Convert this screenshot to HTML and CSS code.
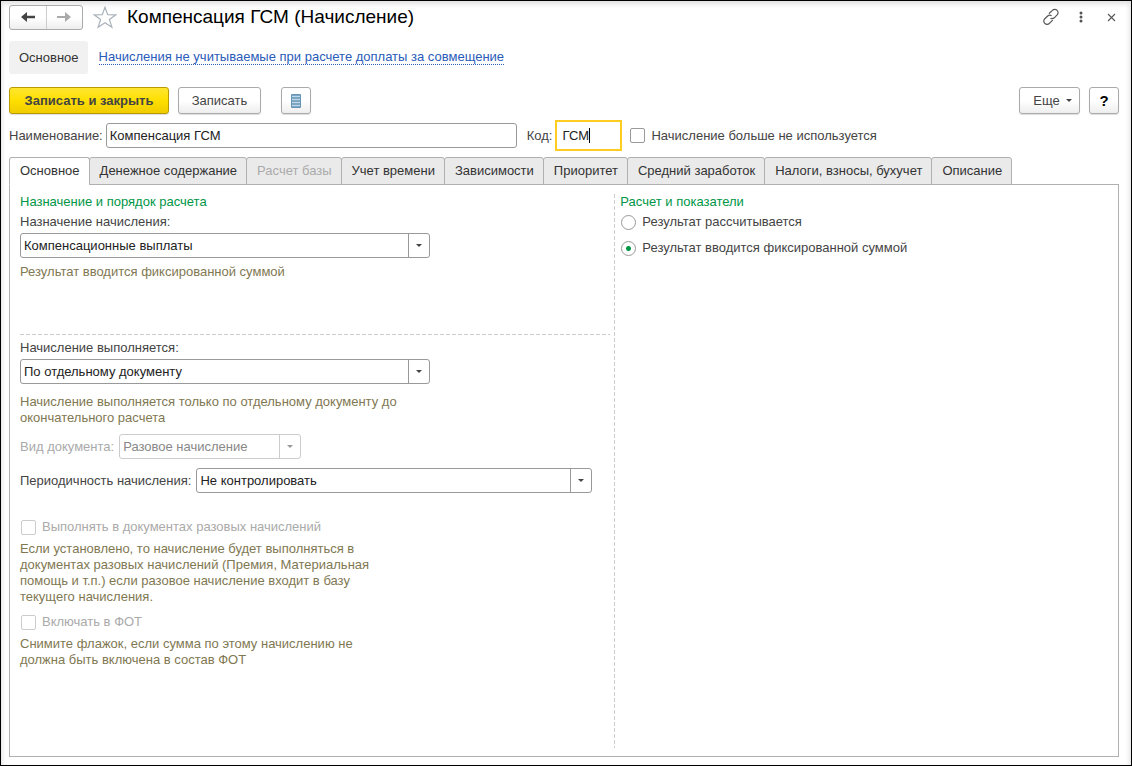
FILE: index.html
```html
<!DOCTYPE html>
<html lang="ru">
<head>
<meta charset="utf-8">
<meta name="viewport" content="width=device-width, initial-scale=1">
<title>Компенсация ГСМ (Начисление)</title>
<link rel="stylesheet" href="styles.css">
</head>
<body>
<main class="window">
  <header class="titlebar">
    <div class="history">
      <button class="history-btn" type="button" aria-label="Назад">
        <svg width="14" height="12" viewBox="0 0 14 12"><path d="M0 6 6 1v3.7h8v2.6H6V11Z" fill="#444"/></svg>
      </button>
      <button class="history-btn" type="button" aria-label="Вперед">
        <svg width="14" height="12" viewBox="0 0 14 12"><path d="M14 6 8 1v3.9H0v2.2h8V11Z" fill="#aaa"/></svg>
      </button>
    </div>
    <button class="icon-btn star" type="button" aria-label="В избранное">
      <svg width="24" height="23" viewBox="0 0 24 23"><path d="M12 1.2 14.7 8.6 22.9 8.8 16.4 13.6 18.9 21.3 12 16.7 5.1 21.3 7.6 13.6 1.1 8.8 9.3 8.6Z" fill="#fff" stroke="#aab2ba" stroke-width="1.2"/></svg>
    </button>
    <h1 class="title">Компенсация ГСМ (Начисление)</h1>
    <div class="window-tools">
      <button class="icon-btn" type="button" aria-label="Ссылка">
        <svg width="18" height="18" viewBox="0 0 18 18" fill="none" stroke="#555" stroke-width="1.2" stroke-linecap="round"><path d="M7.3 5.3 10.4 2.4a3.1 3.1 0 0 1 4.7 0 3.1 3.1 0 0 1 0 4.5L12.3 9.8a3.1 3.1 0 0 1-3.4.6"/><path d="M10.5 12.4 7.4 15.4a3.1 3.1 0 0 1-4.6 0 3.1 3.1 0 0 1 0-4.6L5.7 8a3.1 3.1 0 0 1 3.5-.5"/></svg>
      </button>
      <button class="icon-btn" type="button" aria-label="Меню">
        <svg width="4" height="12" viewBox="0 0 4 12" fill="#555"><circle cx="2" cy="2" r="1.5"/><circle cx="2" cy="6" r="1.5"/><circle cx="2" cy="10" r="1.5"/></svg>
      </button>
      <button class="icon-btn close" type="button" aria-label="Закрыть">
        <svg width="9" height="9" viewBox="0 0 9 9"><path d="M1 1l7 7M8 1 1 8" stroke="#555" stroke-width="1.1"/></svg>
      </button>
    </div>
  </header>

  <nav class="sections">
    <a class="section-current" href="#main">Основное</a>
    <a class="section-link" href="#excluded">Начисления не учитываемые при расчете доплаты за совмещение</a>
  </nav>

  <div class="commands">
    <button class="btn btn-primary" type="button">Записать и закрыть</button>
    <button class="btn btn-save" type="button">Записать</button>
    <button class="btn btn-list" type="button" aria-label="Список">
      <svg width="10" height="14" viewBox="0 0 10 14"><rect width="10" height="14" rx="1" fill="#6795b5"/><path d="M1 2.5h8M1 5.5h8M1 8.5h8M1 11.5h8" stroke="#bfd9ea" stroke-width="1.4"/></svg>
    </button>
    <button class="btn btn-more" type="button">Еще <span class="caret-down"></span></button>
    <button class="btn btn-help" type="button">?</button>
  </div>

  <div class="identity">
    <label for="name">Наименование:</label>
    <input class="text name" id="name" type="text" value="Компенсация ГСМ">
    <label class="code-label" for="code">Код:</label>
    <span class="code-box"><input class="text code" id="code" type="text" value="ГСМ"><i class="cursor"></i></span>
    <label class="check unused"><input type="checkbox">Начисление больше не используется</label>
  </div>

  <div class="tabs" role="tablist">
    <button class="tab active" role="tab" aria-selected="true" type="button">Основное</button>
    <button class="tab" role="tab" type="button">Денежное содержание</button>
    <button class="tab" role="tab" type="button" disabled>Расчет базы</button>
    <button class="tab" role="tab" type="button">Учет времени</button>
    <button class="tab" role="tab" type="button">Зависимости</button>
    <button class="tab" role="tab" type="button">Приоритет</button>
    <button class="tab" role="tab" type="button">Средний заработок</button>
    <button class="tab" role="tab" type="button">Налоги, взносы, бухучет</button>
    <button class="tab" role="tab" type="button">Описание</button>
  </div>

  <section class="panel" role="tabpanel">
    <div class="column">
      <div class="purpose">
        <h2 class="group-title">Назначение и порядок расчета</h2>
        <label class="line" for="purpose">Назначение начисления:</label>
        <span class="combo wide"><select id="purpose"><option>Компенсационные выплаты</option></select></span>
        <p class="hint">Результат вводится фиксированной суммой</p>
      </div>
      <div class="execution">
        <label class="line" for="mode">Начисление выполняется:</label>
        <span class="combo wide"><select id="mode"><option>По отдельному документу</option></select></span>
        <p class="hint mode-hint">Начисление выполняется только по отдельному документу до окончательного расчета</p>
        <div class="field muted">
          <label for="doc">Вид документа:</label>
          <span class="combo doc"><select id="doc" disabled><option>Разовое начисление</option></select></span>
        </div>
        <div class="field">
          <label for="period">Периодичность начисления:</label>
          <span class="combo period"><select id="period"><option>Не контролировать</option></select></span>
        </div>
        <label class="check muted single"><input type="checkbox" disabled>Выполнять в документах разовых начислений</label>
        <p class="hint">Если установлено, то начисление будет выполняться в документах разовых начислений (Премия, Материальная помощь и т.п.) если разовое начисление входит в базу текущего начисления.</p>
        <label class="check muted"><input type="checkbox" disabled>Включать в ФОТ</label>
        <p class="hint">Снимите флажок, если сумма по этому начислению не должна быть включена в состав ФОТ</p>
      </div>
    </div>
    <div class="column results">
      <h2 class="group-title">Расчет и показатели</h2>
      <label class="check"><input type="radio" name="result">Результат рассчитывается</label>
      <label class="check"><input type="radio" name="result" checked>Результат вводится фиксированной суммой</label>
    </div>
  </section>
</main>
</body>
</html>
```

FILE: styles.css
```css
* { box-sizing: border-box; }

body {
  margin: 0;
  background: #fff;
  color: #444;
  font: 13px/16px "Liberation Sans", Arial, sans-serif;
}

button, input, select { font: inherit; color: inherit; margin: 0; }
h1, h2, p { margin: 0; font-weight: normal; }

.window {
  display: flex;
  flex-direction: column;
  min-height: 100vh;
  padding: 4px 12px 8px 8px;
  border: 1px solid #000;
  box-shadow: inset 0 5px 5px -2px #e2e0e2, inset -4px 0 4px -2px #e8e8e8, inset 4px 0 4px -3px #e8e4e6;
}

/* Title bar */
.titlebar { display: flex; align-items: center; height: 24px; }
.history {
  display: flex;
  width: 74px;
  height: 25px;
  border: 1px solid #aaa;
  border-radius: 3px;
  background: linear-gradient(#fff 50%, #eee);
}
.history-btn {
  display: flex;
  flex: 1;
  align-items: center;
  justify-content: center;
  padding: 0;
  border: 0;
  background: none;
}
.history-btn + .history-btn { border-left: 1px solid #ccc; }
.icon-btn { display: flex; padding: 0; border: 0; background: none; }
.star { margin: 0 10px; }
.title { color: #000; font-size: 19px; line-height: 24px; }
.window-tools {
  display: flex;
  align-items: center;
  gap: 19px;
  margin-left: auto;
  padding-right: 3px;
}
.close { margin-left: 5px; }

/* Section links */
.sections { display: flex; align-items: center; gap: 11px; margin-top: 12px; }
.section-current {
  padding: 9px 9px 8px 10px;
  border-radius: 3px;
  background: #f1f1f1;
  color: #333;
  text-decoration: none;
}
.section-link {
  border-bottom: 1px dotted #2a5bb8;
  color: #2a5bb8;
  line-height: 14px;
  text-decoration: none;
}

/* Command bar */
.commands { display: flex; margin-top: 13px; }
.btn {
  display: flex;
  align-items: center;
  justify-content: center;
  height: 27px;
  padding: 0 12px;
  border: 1px solid #aaa;
  border-radius: 3px;
  background: linear-gradient(#fff 50%, #eee);
  box-shadow: 0 1px 1px #ddd;
}
.btn-primary {
  min-width: 160px;
  border-color: #b89b00;
  background: linear-gradient(#ffe630, #ffdf00 50%, #f0cc00);
  font-weight: bold;
}
.btn-save { min-width: 83px; margin-left: 9px; }
.btn-list { width: 30px; margin-left: 20px; padding: 0; }
.btn-more { min-width: 61px; margin-left: auto; padding: 0 6px 0 12px; gap: 6px; }
.btn-help { width: 30px; margin-left: 9px; padding: 0; color: #000; font-size: 15px; font-weight: bold; }
.caret-down { border: 3px solid transparent; border-top-color: #444; border-bottom: 0; }

/* Name and code */
.identity { display: flex; align-items: center; margin-top: 6px; }
.text {
  min-width: 0;
  border: 1px solid #999;
  border-radius: 3px;
  background: #fff;
  color: #222;
  outline: 0;
}
.name { flex: 0 1 411px; height: 25px; margin-left: 3px; padding: 0 3px; }
.code-label { margin-left: 10px; }
.code-box { position: relative; display: flex; margin-left: 3px; }
.code { width: 67px; height: 31px; padding: 0 5px; border: 2px solid #fc2; border-radius: 0; }
.cursor { position: absolute; top: 8px; left: 34px; width: 1px; height: 15px; background: #000; }

/* Tick boxes and radio buttons */
.check { display: flex; align-items: center; gap: 6px; }
.check input {
  flex: none;
  width: 15px;
  height: 15px;
  border: 1px solid #999;
  border-radius: 2px;
  background: #fff;
  appearance: none;
}
.check input[type="radio"] { border-radius: 50%; }
.check input:checked { background: radial-gradient(circle, #009646 2px, #fff 3px); }
.check input:disabled { border-color: #ccc; }
.panel .check { padding-left: 1px; }
.unused { margin-left: 8px; }
.muted { color: #aaa; }

/* Tabs */
.tabs { display: flex; z-index: 1; margin-top: 6px; }
.tab {
  height: 28px;
  margin-right: -1px;
  padding: 0 9px 0 10px;
  border: 1px solid #b0b0b0;
  border-radius: 3px 3px 0 0;
  background: #eaeaea;
  color: #333;
  white-space: nowrap;
}
.tab.active { border-bottom-color: #fff; background: #fff; }
.tab:disabled { color: #aaa; }

.panel {
  display: grid;
  flex: 1;
  grid-template-columns: 6fr 5fr;
  margin-top: -1px;
  padding: 9px 0 8px;
  border: 1px solid #b0b0b0;
}
.column { min-width: 0; padding-left: 10px; }
.group-title { color: #009646; font-size: 13px; line-height: 16px; }
.line { display: block; margin: 4px 0 3px; }
.hint { max-width: 380px; color: #7f7852; }

.purpose {
  min-height: 141px;
  margin-right: 4px;
  background: repeating-linear-gradient(90deg, #ccc 0 4px, transparent 4px 6px) bottom / 100% 1px no-repeat;
}
.purpose .hint { margin-top: 6px; }
.execution { padding-top: 1px; }

/* Drop-down fields */
.combo { position: relative; display: block; max-width: 100%; }
.combo select {
  display: block;
  width: 100%;
  height: 25px;
  padding: 0 24px 0 3px;
  border: 1px solid #999;
  border-radius: 3px;
  background: linear-gradient(#999, #999) right 20px top / 1px 100% no-repeat #fff;
  color: #222;
  appearance: none;
}
.combo::after {
  content: "";
  position: absolute;
  top: 11px;
  right: 8px;
  border: 3px solid transparent;
  border-top-color: #444;
  border-bottom: 0;
  pointer-events: none;
}
.combo select:disabled {
  border-color: #ccc;
  background-image: linear-gradient(#ccc, #ccc);
  color: #888;
  opacity: 1;
}
.muted .combo::after { border-top-color: #999; }
.wide { width: 410px; }
.doc { width: 182px; }
.period { width: 396px; }
.field { display: flex; align-items: center; gap: 5px; margin-top: 9px; }
.mode-hint { margin: 10px 0 8px; }
.mode-hint + .field { margin-top: 8px; }
.single { margin-top: 26px; }
.execution .check + .hint { margin: 6px 0 9px; }

.results {
  padding-left: 6px;
  background: repeating-linear-gradient(#ccc 0 4px, transparent 4px 6px) left / 1px 100% no-repeat;
}
.results .check { margin: 4px 0 10px; }
```
